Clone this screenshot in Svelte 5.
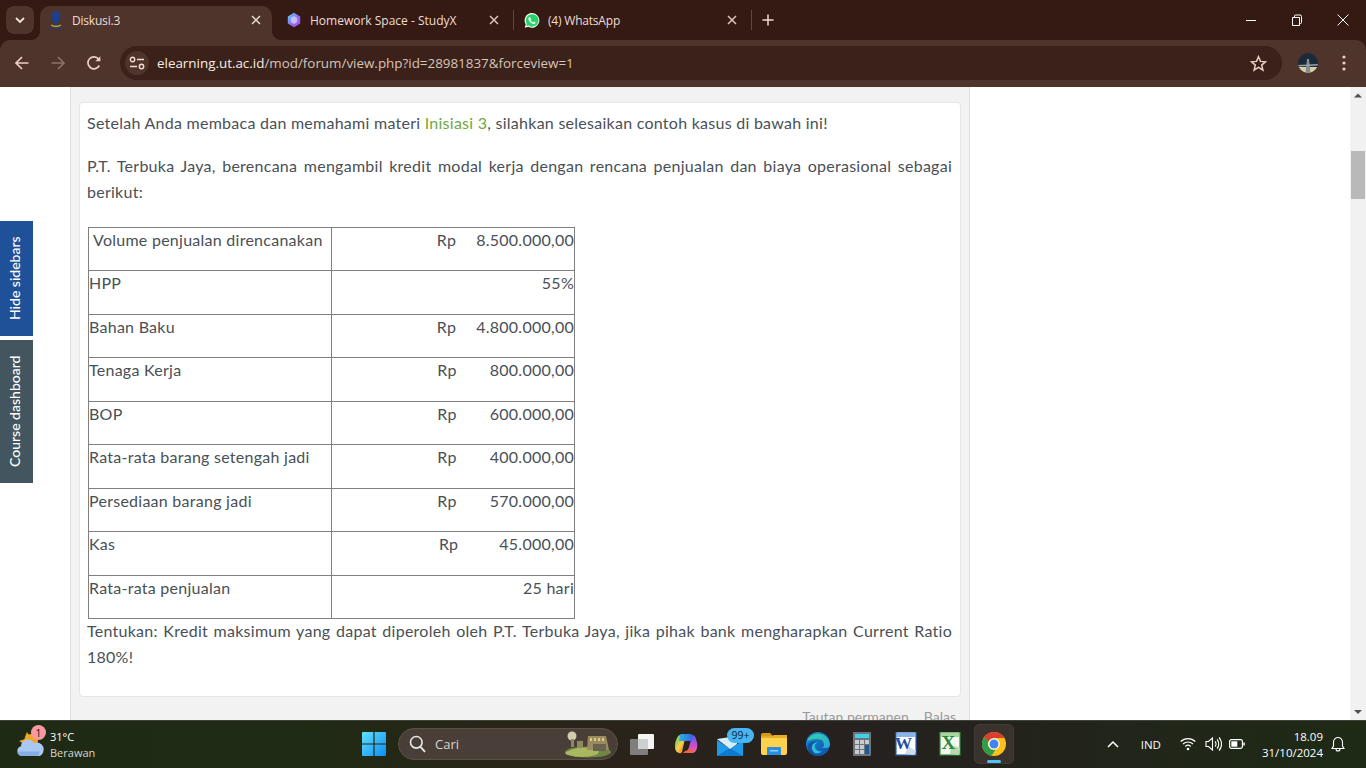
<script>
  const rows = [
    { label: 'Volume penjualan direncanakan', rp: true, value: '8.500.000,00', gap: 'g20', first: true },
    { label: 'HPP', value: '55%' },
    { label: 'Bahan Baku', rp: true, value: '4.800.000,00', gap: 'g20' },
    { label: 'Tenaga Kerja', rp: true, value: '800.000,00', gap: 'g33' },
    { label: 'BOP', rp: true, value: '600.000,00', gap: 'g33' },
    { label: 'Rata-rata barang setengah jadi', rp: true, value: '400.000,00', gap: 'g33' },
    { label: 'Persediaan barang jadi', rp: true, value: '570.000,00', gap: 'g33' },
    { label: 'Kas', rp: true, value: '45.000,00', gap: 'g41' },
    { label: 'Rata-rata penjualan', value: '25 hari' }
  ];
</script>

<div class="screen">
  <header class="chrome">
    <div class="tabstrip">
      <button class="tabsearch" aria-label="Cari tab">
        <svg width="12" height="12" viewBox="0 0 12 12"><path d="M2 4l4 4 4-4" fill="none" stroke="#f3e2da" stroke-width="1.8"/></svg>
      </button>
      <div class="tab active">
        <svg class="fav" width="16" height="18" viewBox="0 0 16 18">
          <ellipse cx="8" cy="6" rx="4.2" ry="6" fill="#1c3f8f"/>
          <path d="M7 11h2v4H7z" fill="#1c3f8f"/>
          <path d="M3 14q5 3 10 0" fill="none" stroke="#c9a92a" stroke-width="1.3"/>
          <path d="M1 17h14" stroke="#1c3f8f" stroke-width="1"/>
        </svg>
        <span class="tabtitle narrow">Diskusi.3</span>
        <svg class="x" width="10" height="10" viewBox="0 0 10 10"><path d="M1 1l8 8M9 1L1 9" stroke="#f3e2da" stroke-width="1.5"/></svg>
      </div>
      <div class="tab second">
        <svg class="fav" width="16" height="16" viewBox="0 0 16 16">
          <defs><linearGradient id="sx" x1="0" y1="0" x2="1" y2="1"><stop offset="0" stop-color="#5fd6f5"/><stop offset=".55" stop-color="#8a6cf0"/><stop offset="1" stop-color="#c04fe0"/></linearGradient></defs>
          <path d="M8 .8l6.2 3.6v7.2L8 15.2 1.8 11.6V4.4z" fill="url(#sx)"/>
          <path d="M8 4l3.2 2v4L8 12 4.800 10V6z" fill="#d9d4ff" opacity=".75"/>
        </svg>
        <span class="tabtitle">Homework Space - StudyX</span>
        <svg class="x" width="10" height="10" viewBox="0 0 10 10"><path d="M1 1l8 8M9 1L1 9" stroke="#e8cfc5" stroke-width="1.5"/></svg>
      </div>
      <i class="sep"></i>
      <div class="tab third">
        <svg class="fav" width="16" height="17" viewBox="0 0 17 17">
          <path d="M8.500.6a7.800 7.800 0 0 0-6.700 11.800L.8 16.200l3.900-1a7.800 7.800 0 1 0 3.800-14.600z" fill="#fff"/>
          <path d="M8.500 1.800a6.600 6.600 0 0 0-5.600 10.100l-.6 2.500 2.600-.7a6.600 6.600 0 1 0 3.600-11.900z" fill="#25d366"/>
          <path d="M6.200 4.800c-.3 0-.7.100-1 .5-.5.600-.7 1.400-.5 2.200.4 1.600 2.700 4.200 5 4.800.9.200 1.700-.1 2.200-.7.300-.4.400-.9.300-1.200l-1.700-.9-.9 1c-1-.3-2.300-1.500-2.700-2.500l.7-.9-.9-1.900z" fill="#fff"/>
        </svg>
        <span class="tabtitle narrow">(4) WhatsApp</span>
        <svg class="x" width="10" height="10" viewBox="0 0 10 10"><path d="M1 1l8 8M9 1L1 9" stroke="#e8cfc5" stroke-width="1.5"/></svg>
      </div>
      <i class="sep"></i>
      <button class="newtab" aria-label="Tab baru">
        <svg width="12" height="12" viewBox="0 0 12 12"><path d="M6 .5v11M.5 6h11" stroke="#f0d8ce" stroke-width="1.500"/></svg>
      </button>
      <div class="winctl">
        <svg width="46" height="12" viewBox="0 0 46 12"><path d="M18 6.500h10" stroke="#fff" stroke-width="1"/></svg>
        <svg width="46" height="12" viewBox="0 0 46 12"><path d="M18.500 3.500h7v8h-7zM20.500 3.500V2a1 1 0 0 1 1-1h4.500a1.500 1.500 0 0 1 1.500 1.500V8.500a1 1 0 0 1-1 1h-1" fill="none" stroke="#fff" stroke-width="1"/></svg>
        <svg width="46" height="12" viewBox="0 0 46 12"><path d="M17.500.5l11 11M28.500.5l-11 11" stroke="#fff" stroke-width="1"/></svg>
      </div>
    </div>

    <div class="toolbar">
      <button class="navbtn" aria-label="Kembali">
        <svg width="16" height="16" viewBox="0 0 16 16"><path d="M14.500 8H2M8 2L2 8l6 6" fill="none" stroke="#eccfc4" stroke-width="1.700"/></svg>
      </button>
      <button class="navbtn" aria-label="Maju">
        <svg width="16" height="16" viewBox="0 0 16 16"><path d="M1.500 8H14M8 2l6 6-6 6" fill="none" stroke="#8a7169" stroke-width="1.700"/></svg>
      </button>
      <button class="navbtn" aria-label="Muat ulang">
        <svg width="16" height="16" viewBox="0 0 16 16"><path d="M13.300 10.500A6 6 0 1 1 12.600 4L14 5.400" fill="none" stroke="#eccfc4" stroke-width="1.700"/><path d="M14.300 1.300v5h-5z" fill="#eccfc4"/></svg>
      </button>
      <div class="omnibox">
        <span class="tune">
          <svg width="16" height="14" viewBox="0 0 16 14">
            <circle cx="3.500" cy="3.500" r="2.200" fill="none" stroke="#f0dcd4" stroke-width="1.400"/>
            <path d="M8 3.500h7M1 10.500h7" stroke="#f0dcd4" stroke-width="1.500"/>
            <circle cx="12.500" cy="10.500" r="2.200" fill="none" stroke="#f0dcd4" stroke-width="1.400"/>
          </svg>
        </span>
        <span class="url"><b>elearning.ut.ac.id</b>/mod/forum/view.php?id=28981837&amp;forceview=1</span>
        <svg class="star" width="17" height="17" viewBox="0 0 17 17"><path d="M8.500 1.700l2 4.700 5 .4-3.800 3.300 1.200 5-4.400-2.700-4.400 2.700 1.200-5L1.500 6.800l5-.4z" fill="none" stroke="#eccfc4" stroke-width="1.500"/></svg>
      </div>
      <svg class="avatar" width="20" height="20" viewBox="0 0 20 20">
        <defs><clipPath id="av"><ellipse cx="10" cy="10" rx="10" ry="10"/></clipPath></defs>
        <g clip-path="url(#av)">
          <rect width="20" height="20" fill="#1b2a3a"/>
          <rect y="14" width="20" height="6" fill="#d9cfa6"/>
          <path d="M9 6h2l1.500 14h-5z" fill="#8b8c92"/>
          <path d="M0 12l20-1v1.500L0 13.500z" fill="#9aa2aa"/>
        </g>
      </svg>
      <svg class="dots" width="4" height="16" viewBox="0 0 4 16"><circle cx="2" cy="2" r="1.600" fill="#eccfc4"/><circle cx="2" cy="8" r="1.600" fill="#eccfc4"/><circle cx="2" cy="14" r="1.600" fill="#eccfc4"/></svg>
    </div>
  </header>

  <main class="page">
    <button class="side hide">Hide sidebars</button>
    <button class="side dash">Course dashboard</button>

    <section class="column">
      <article class="card">
        <p>Setelah Anda membaca dan memahami materi <a href="#top">Inisiasi 3</a>, silahkan selesaikan contoh kasus di bawah ini!</p>
        <p class="just">P.T. Terbuka Jaya, berencana mengambil kredit modal kerja dengan rencana penjualan dan biaya operasional sebagai berikut:</p>
        <table>
          <tbody>
            {#each rows as r}
              <tr>
                <td class="lab" class:first={r.first}>{r.label}</td>
                <td class="val">
                  <div class="amount {r.gap ?? ''}">
                    {#if r.rp}<span>Rp</span>{/if}
                    <span>{r.value}</span>
                  </div>
                </td>
              </tr>
            {/each}
          </tbody>
        </table>
        <p class="just last">Tentukan: Kredit maksimum yang dapat diperoleh oleh P.T. Terbuka Jaya, jika pihak bank mengharapkan Current Ratio 180%!</p>
      </article>
      <div class="links"><span>Tautan permanen</span><span>Balas</span></div>
    </section>

    <div class="scrollbar">
      <svg width="16" height="16" viewBox="0 0 16 16"><path d="M4 10.500L8 6.500l4 4z" fill="#505050"/></svg>
      <div class="track"><div class="thumb"></div></div>
      <svg width="16" height="16" viewBox="0 0 16 16"><path d="M4 6l4 4 4-4z" fill="#505050"/></svg>
    </div>
  </main>

  <footer class="taskbar">
    <div class="weather">
      <span class="wicon">
        <svg width="30" height="30" viewBox="0 0 30 30">
          <circle cx="15" cy="12" r="7" fill="#f5a623"/>
          <path d="M3 12l6-2-1 5zM11 3l3 5-5 0z" fill="#f5a623"/>
          <path d="M6 27a5 5 0 0 1-1-9.800A7 7 0 0 1 18 14a6 6 0 0 1 5.500 13z" fill="#a9c8f2"/>
          <path d="M1.500 22.500h22v1a3.500 3.500 0 0 1-3.500 3.500H6a4.500 4.500 0 0 1-4.500-4.500z" fill="#86aee6"/>
        </svg>
        <em>1</em>
      </span>
      <div class="wtext"><strong>31°C</strong><small>Berawan</small></div>
    </div>

    <div class="tbicon win" aria-label="Start">
      <svg width="24" height="24" viewBox="0 0 24 24">
        <defs><linearGradient id="wn" x1="0" y1="0" x2="1" y2="1"><stop offset="0" stop-color="#62e1fb"/><stop offset="1" stop-color="#0c8cf5"/></linearGradient></defs>
        <path d="M0 1a1 1 0 0 1 1-1h10.400v11.400H0zM12.600 0H23a1 1 0 0 1 1 1v10.400H12.600zM0 12.600h11.400V24H1a1 1 0 0 1-1-1zM12.600 12.600H24V23a1 1 0 0 1-1 1H12.600z" fill="url(#wn)"/>
      </svg>
    </div>

    <div class="search">
      <svg width="17" height="18" viewBox="0 0 17 18"><circle cx="7.300" cy="7.300" r="5.800" fill="none" stroke="#e8e8e8" stroke-width="1.600"/><path d="M11.500 11.800l4.500 5" stroke="#e8e8e8" stroke-width="1.800"/></svg>
      <span>Cari</span>
      <svg class="scene" width="48" height="28" viewBox="0 0 48 28">
        <ellipse cx="24" cy="22" rx="23" ry="5.500" fill="#6f8742"/>
        <path d="M2 22q14-7 30-3 6 2 0 6-14 4-28 0-4-1-2-3z" fill="#a9b860"/>
        <circle cx="8" cy="6" r="4.500" fill="#d3ccac"/>
        <path d="M7 9h3v8H7zM13 11h6v7h-6z" fill="#8d8a5f"/>
        <path d="M24 6h18l3 14H23z" fill="#9c8a63"/>
        <path d="M26 8h2v3h-2zM30 8h2v3h-2zM34 8h2v3h-2zM38 8h2v3h-2z" fill="#e3c87a"/>
        <path d="M29 14h13v7H29z" fill="#6a6250"/>
      </svg>
    </div>

    <div class="tbicon" aria-label="Task view">
      <svg width="24" height="22" viewBox="0 0 24 22">
        <rect x="8" y="1" width="16" height="15" rx="1" fill="#f4f4f4"/>
        <rect x="0" y="6" width="18" height="16" rx="1" fill="#8e8e8e" opacity=".85"/>
        <rect x="8" y="6" width="10" height="10" fill="#cfcfcf"/>
      </svg>
    </div>
    <div class="tbicon" aria-label="Copilot">
      <svg width="24" height="24" viewBox="0 0 24 24">
        <defs>
          <linearGradient id="c1" x1="0" y1="0" x2="1" y2="0"><stop offset="0" stop-color="#1fb6e8"/><stop offset="1" stop-color="#3c5ee6"/></linearGradient>
          <linearGradient id="c2" x1="0" y1="0" x2="1" y2="1"><stop offset="0" stop-color="#4cc38a"/><stop offset=".5" stop-color="#f4d03f"/><stop offset="1" stop-color="#f0603c"/></linearGradient>
          <linearGradient id="c3" x1="0" y1="0" x2="0" y2="1"><stop offset="0" stop-color="#5a5be8"/><stop offset=".6" stop-color="#c94fd0"/><stop offset="1" stop-color="#f06a8a"/></linearGradient>
        </defs>
        <path d="M6 3h6l-2 8-2 9q-1 2-3 1-4-1-4-6 0-6 2-9 1-3 3-3z" fill="url(#c2)"/>
        <path d="M11 20q3-1 4-5l2-7q1-3-1-5h2q3 0 4 4 2 5 1 9-1 5-5 5h-7z" fill="url(#c3)"/>
        <path d="M7 2h9q3 0 3 3l-1 4H5l1-5q0-2 1-2z" fill="url(#c1)"/>
        <path d="M9 21h7q3-1 4-4l-5 1-4 1z" fill="#f0643c"/>
      </svg>
    </div>
    <div class="tbicon" aria-label="Mail">
      <svg width="26" height="20" viewBox="0 0 26 20" class="mail">
        <path d="M0 4l13 9L26 4v16H0z" fill="#1d9bea"/>
        <path d="M0 20l13-8 13 8z" fill="#0f78cf"/>
        <path d="M0 3l20-3v8l-7 5z" fill="#d7effc"/>
      </svg>
      <b class="badge">99+</b>
    </div>
    <div class="tbicon" aria-label="File Explorer">
      <svg width="26" height="22" viewBox="0 0 26 22">
        <path d="M0 2a2 2 0 0 1 2-2h7l3 3h-12z" fill="#d79a12"/>
        <path d="M0 3h26v17a2 2 0 0 1-2 2H2a2 2 0 0 1-2-2z" fill="#ffd24d"/>
        <path d="M0 3h11l2-1h13v3H0z" fill="#e8ad22"/>
        <path d="M6 15a1 1 0 0 1 1-1h12a1 1 0 0 1 1 1v7H6z" fill="#2a8fe0"/>
        <rect x="9" y="17" width="8" height="1.500" fill="#8ccdf5"/>
      </svg>
    </div>
    <div class="tbicon" aria-label="Edge">
      <svg width="24" height="24" viewBox="0 0 24 24">
        <defs>
          <linearGradient id="e1" x1="0" y1="0" x2="1" y2="1"><stop offset="0" stop-color="#34d49a"/><stop offset="1" stop-color="#2aa6e4"/></linearGradient>
          <linearGradient id="e2" x1="0" y1="0" x2="1" y2="1"><stop offset="0" stop-color="#1d8fd8"/><stop offset="1" stop-color="#0b4fa8"/></linearGradient>
        </defs>
        <circle cx="12" cy="12" r="12" fill="url(#e2)"/>
        <path d="M1 9A12 12 0 0 1 24 12q0 4-4 4h-4q2-1 2-3 0-6-7-6-6 0-10 2z" fill="url(#e1)"/>
        <path d="M11 9q-5 2-4 7t8 6q-9 3-13-4-1-3 0-6 4-3 9-3z" fill="#0d3f8e" opacity=".6"/>
        <path d="M12 10.500q-4 1-3 5t7 4q-4 3-7.500 1.500Q5 18 6 13.500 8 10 12 10.500z" fill="#3ccfd8" opacity=".8"/>
      </svg>
    </div>
    <div class="tbicon" aria-label="Kalkulator">
      <svg width="18" height="24" viewBox="0 0 18 24">
        <rect width="18" height="24" rx="1" fill="#6e7478"/>
        <rect x="2" y="2" width="14" height="4" fill="#40d0ee"/>
        <g fill="#c7ccd0"><rect x="2" y="8" width="4" height="4"/><rect x="7" y="8" width="4" height="4"/><rect x="12" y="8" width="4" height="4"/><rect x="2" y="13" width="4" height="4"/><rect x="7" y="13" width="4" height="4"/><rect x="2" y="18" width="4" height="4"/><rect x="7" y="18" width="4" height="4"/></g>
        <rect x="12" y="13" width="4" height="9" fill="#1a5a9c"/>
      </svg>
    </div>
    <div class="tbicon" aria-label="Word">
      <svg width="24" height="24" viewBox="0 0 24 24">
        <rect x="2" width="20" height="23" fill="#fff"/>
        <rect x="2" width="20" height="23" fill="none" stroke="#2a62b5" stroke-width="1.200"/>
        <rect x="3" y="1" width="18" height="4" fill="#8ab4e8"/>
        <path d="M14 14l8 5-2 4-9-1z" fill="#cfdcee"/>
        <text x="1" y="17" class="ltr word">W</text>
      </svg>
    </div>
    <div class="tbicon" aria-label="Excel">
      <svg width="24" height="24" viewBox="0 0 24 24">
        <rect x="2" width="20" height="23" fill="#f3f8ef"/>
        <rect x="2" width="20" height="23" fill="none" stroke="#2f8a3f" stroke-width="1.200"/>
        <rect x="3" y="1" width="18" height="4" fill="#a9d69a"/>
        <path d="M13 13l9 3-1 7-9-1z" fill="#b9d8b0"/>
        <text x="3.500" y="17" class="ltr excel">X</text>
      </svg>
    </div>
    <div class="tbicon running" aria-label="Chrome">
      <svg width="24" height="24" viewBox="0 0 24 24">
        <circle cx="12" cy="12" r="12" fill="#fbc116"/>
        <path d="M12 0a12 12 0 0 1 10.400 6H12a6 6 0 0 0-5.600 3.700L2.100 5.200A12 12 0 0 1 12 0z" fill="#dd3c30"/>
        <path d="M2.100 5.200A12 12 0 0 0 9.600 23.800l4-6.200a6 6 0 0 1-7.300-8z" fill="#2c9e4c"/>
        <circle cx="12" cy="12" r="5.800" fill="#fff"/>
        <circle cx="12" cy="12" r="4.500" fill="#3f84ef"/>
      </svg>
      <i class="indicator"></i>
    </div>

    <div class="tray">
      <svg class="chev" width="12" height="8" viewBox="0 0 12 8"><path d="M1 7l5-5 5 5" fill="none" stroke="#fff" stroke-width="1.500"/></svg>
      <span class="lang">IND</span>
      <svg class="wifi" width="16" height="14" viewBox="0 0 16 14"><path d="M.7 4.500a10.500 10.500 0 0 1 14.600 0M3 7a7.200 7.200 0 0 1 10 0M5.300 9.500a3.900 3.900 0 0 1 5.400 0" fill="none" stroke="#fff" stroke-width="1.200"/><circle cx="8" cy="12" r="1.300" fill="#fff"/></svg>
      <svg class="vol" width="17" height="16" viewBox="0 0 17 16"><path d="M1 5.500h2.500L7.500 2v12l-4-3.500H1z" fill="none" stroke="#fff" stroke-width="1.100"/><path d="M10 5.500a3.500 3.500 0 0 1 0 5M12 3.500a6.500 6.500 0 0 1 0 9M14 1.500a9.500 9.500 0 0 1 0 13" fill="none" stroke="#fff" stroke-width="1.100"/></svg>
      <svg class="bat" width="16" height="10" viewBox="0 0 16 10"><rect x=".6" y=".6" width="12.800" height="8.800" rx="1.800" fill="none" stroke="#fff" stroke-width="1.200"/><rect x="2.300" y="2.300" width="6" height="5.400" fill="#fff"/><rect x="14.300" y="3.500" width="1.500" height="3" fill="#fff"/></svg>
      <div class="clock"><span>18.09</span><span>31/10/2024</span></div>
      <svg class="bell" width="14" height="16" viewBox="0 0 14 16"><path d="M1 12.500h12l-1.500-2.500V6a4.500 4.500 0 0 0-9 0v4zM5 13q0 2 2 2t2-2" fill="none" stroke="#fff" stroke-width="1.100"/></svg>
    </div>
  </footer>
</div>

<style>
  :global(body) { margin: 0; background: #fff; }
  .screen {
    width: 1366px; height: 768px; display: flex; flex-direction: column; overflow: hidden;
    font-family: "Open Sans", "Noto Sans", sans-serif;
  }
  button { border: 0; background: none; padding: 0; font: inherit; color: inherit; display: flex; align-items: center; justify-content: center; }
  svg { display: block; flex: none; }

  /* browser frame */
  .chrome { height: 87px; background: #341a13; color: #f0dcd4; flex: none; display: flex; flex-direction: column; }
  .tabstrip { height: 40px; display: flex; align-items: flex-end; padding-left: 6px; flex: none; }
  .tabsearch { width: 28px; height: 28px; margin: 0 6px 6px 0; background: #4f342c; border-radius: 8px; }
  .tab { height: 34px; display: flex; align-items: center; padding-bottom: 6px; box-sizing: border-box; font-size: 12px; position: relative; flex: none; }
  .tab.active { width: 232px; padding-left: 8px; padding-right: 11px; background: #4f342c; border-radius: 10px 10px 0 0; }
  .tab.second { width: 241px; padding-left: 14px; padding-right: 14px; }
  .tab.third { width: 237px; padding-left: 10px; padding-right: 14px; }
  .tab.active::after {
    content: ""; position: absolute; right: -10px; bottom: 0; width: 10px; height: 10px;
    background: radial-gradient(circle at 100% 0, transparent 10px, #4f342c 10.500px);
  }
  .tab.active::before {
    content: ""; position: absolute; left: -10px; bottom: 0; width: 10px; height: 10px;
    background: radial-gradient(circle at 0 0, transparent 10px, #4f342c 10.500px);
  }
  .fav { margin-right: 8px; }
  .tabtitle { flex: 1; color: #f0dcd4; white-space: nowrap; }
  .tabtitle.narrow { letter-spacing: -.2px; }
  .x { opacity: .95; }
  .sep { width: 1px; height: 20px; background: #5f463e; margin: 0 0 10px; flex: none; }
  .newtab { width: 32px; height: 28px; margin-bottom: 6px; }
  .winctl { margin-left: auto; display: flex; align-items: center; height: 40px; align-self: flex-start; padding-right: 0; }
  .toolbar { flex: 1; background: #4f342c; border-radius: 10px 10px 0 0; display: flex; align-items: center; padding: 0 0 1px 4px; }
  .navbtn { width: 36px; height: 34px; }
  .omnibox { width: 1162px; height: 34px; margin-left: 8px; border-radius: 17px; background: #3a2119; display: flex; align-items: center; padding-left: 5px; box-sizing: border-box; }
  .tune { width: 24px; height: 24px; border-radius: 50%; background: #4f342c; display: flex; align-items: center; justify-content: center; flex: none; }
  .url { margin-left: 8px; font-size: 13.400px; color: #d9c3ba; white-space: nowrap; flex: 1; }
  .url b { font-weight: 400; color: #f8ece6; }
  .star { margin-right: 15px; }
  .avatar { margin-left: 16px; }
  .dots { margin-left: 24px; }

  /* page */
  .page { flex: 1; min-height: 0; position: relative; background: #fff; overflow: hidden; font-family: "Lato", "Open Sans", sans-serif; color: #495057; }
  .side { position: absolute; left: 0; width: 33px; padding-left: 4px; box-sizing: border-box; color: #fff; font-size: 14px; writing-mode: vertical-rl; transform: rotate(180deg); font-family: "Lato", sans-serif; font-weight: 500; }
  .hide { top: 134px; height: 115px; background: #1f5199; }
  .dash { top: 253px; height: 143px; background: #43565f; }

  .column { margin-left: 70px; width: 900px; height: 100%; box-sizing: border-box; background: #f2f2f2; border: solid #e2e2e2; border-width: 0 1px; padding: 15px 8px 0; }
  .card { background: #fff; border: 1px solid #e6e6e6; border-radius: 4px; padding: 7px 8px 26px 7px; height: 595px; box-sizing: border-box; font-size: 16px; letter-spacing: .26px; line-height: 26px; }
  p { margin: 0 0 17px; }
  .just { text-align: justify; margin-bottom: 22px; }
  .just.last { margin: -1px 0 0; }
  a { color: #6fa83c; text-decoration: none; }
  table { border-collapse: collapse; margin-left: 1px; width: 487px; table-layout: fixed; }
  td { border: 1px solid #808080; height: 43.450px; padding: 0; vertical-align: top; box-sizing: border-box; line-height: 24px; }
  .lab { width: 243px; }
  .lab.first { padding-left: 4px; }
  .amount { display: flex; justify-content: flex-end; }
  .g20 { gap: 20px; }
  .g33 { gap: 33px; }
  .g41 { gap: 41px; }
  .links { display: flex; justify-content: flex-end; gap: 15px; padding: 10px 5px 0 0; font-size: 14px; color: #9a9a9a; line-height: 20px; }

  .scrollbar { position: absolute; right: 0; top: 0; bottom: 0; width: 16px; background: #f1f1f1; display: flex; flex-direction: column; }
  .track { flex: 1; padding: 48px 1px 0; }
  .thumb { height: 48px; background: #b9b9b9; }

  /* taskbar */
  .taskbar {
    height: 48px; flex: none; display: flex; align-items: center; box-sizing: border-box; padding: 0 0 1px 16px;
    border-top: 1px solid #3f4238; color: #fff;
    background: linear-gradient(90deg, #1e2a14 0%, #1f2b14 22%, #2b2419 40%, #26211f 62%, #22241b 78%, #1e2a16 100%);
    font-family: "Open Sans", "Noto Sans", sans-serif;
  }
  .weather { width: 336px; display: flex; align-items: center; gap: 4px; flex: none; }
  .wicon { position: relative; width: 30px; height: 30px; }
  .wicon em { position: absolute; left: 15px; top: -4px; width: 15px; height: 15px; border-radius: 50%; background: #f99aa3; color: #2a1a1a; font: 11px/15px "Open Sans", sans-serif; text-align: center; }
  .wtext { display: flex; flex-direction: column; line-height: 16px; font-size: 11px; margin-top: 1px; }
  .wtext strong { font-weight: 400; color: #fff; }
  .wtext small { font-size: 11px; color: #d6d6ce; }
  .tbicon { width: 44px; height: 40px; flex: none; display: flex; align-items: center; justify-content: center; position: relative; }
  .win { margin-right: 2px; }
  .search { width: 220px; height: 32px; border-radius: 16px; margin-right: 2px; background: #4a3f38; border: 1px solid #5a5047; box-sizing: border-box; display: flex; align-items: center; padding-left: 10px; flex: none; font-size: 13px; color: #d8d4cf; }
  .search span { margin-left: 9px; flex: 1; }
  .scene { margin-right: 5px; }
  .mail { margin: 4px 0 0 -1px; }
  .badge { position: absolute; left: 19px; top: 4px; height: 15px; width: 27px; border-radius: 8px; background: #46b6f4; color: #10222e; font: 400 10.500px/15px "Open Sans", sans-serif; text-align: center; }
  .ltr { font-family: "Liberation Serif", serif; font-weight: 700; }
  .word { font-size: 17px; fill: #1d4fa3; }
  .excel { font-size: 19px; fill: #2a8a3c; }
  .running { background: #3a322d; border-radius: 5px; border: 1px solid #423a34; box-sizing: border-box; margin: 0 2px; width: 40px; }
  .indicator { position: absolute; left: 12px; bottom: 0; width: 14px; height: 3px; border-radius: 2px; background: #4fc3f7; }
  .tray { margin-left: auto; display: flex; align-items: center; font-size: 11.500px; padding-right: 21px; }
  .chev { margin-right: 22px; }
  .lang { margin-right: 19px; }
  .wifi { margin-right: 9px; }
  .vol { margin-right: 7px; }
  .bat { margin-right: 17px; }
  .clock { display: flex; flex-direction: column; align-items: flex-end; line-height: 16px; margin-right: 8px; margin-top: 1px; }
</style>
